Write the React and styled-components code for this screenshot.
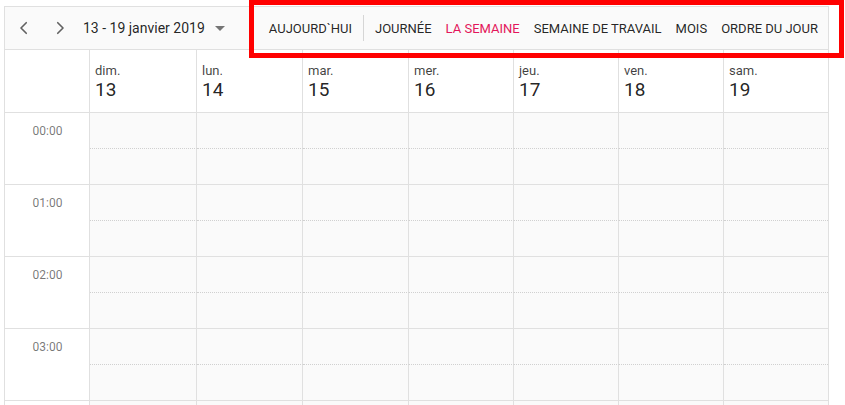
import React from "react";
import styled, { createGlobalStyle } from "styled-components";

const GlobalStyle = createGlobalStyle`
  html, body { margin: 0; padding: 0; background: #fff; overflow: hidden; }
  body { font-family: Roboto, "Noto Sans", "Liberation Sans", sans-serif; }
`;

const Page = styled.div`
  position: relative;
  padding: 6px 0 0 4px;
  height: 405px;
  box-sizing: border-box;
  overflow: hidden;
`;

const Scheduler = styled.div`
  width: 825px;
  box-sizing: border-box;
  border: 1px solid #e0e0e0;
  border-bottom: none;
  background: #fff;
`;

const Toolbar = styled.div`
  display: flex;
  align-items: center;
  height: 43px;
  box-sizing: border-box;
  background: #fafafa;
  border-bottom: 1px solid #e0e0e0;
  padding: 0 3px 0 1px;
`;

const NavButton = styled.button`
  display: flex;
  align-items: center;
  justify-content: center;
  width: 36px;
  height: 36px;
  padding: 0;
  border: none;
  background: transparent;
  color: #616161;
  cursor: pointer;
`;

const DateRange = styled.div`
  display: flex;
  align-items: center;
  margin-left: 5px;
  font-size: 14px;
  color: rgba(0, 0, 0, 0.87);
`;

const Caret = styled.span`
  display: inline-block;
  margin-left: 10px;
  margin-top: 1px;
  width: 0;
  height: 0;
  border-left: 5px solid transparent;
  border-right: 5px solid transparent;
  border-top: 5px solid #757575;
`;

const RightGroup = styled.div`
  display: flex;
  align-items: center;
  margin-left: auto;
`;

const ViewButton = styled.button`
  border: none;
  background: transparent;
  padding: 0 7px;
  height: 32px;
  font-family: Roboto, "Noto Sans", "Liberation Sans", sans-serif;
  font-size: 13px;
  text-transform: uppercase;
  color: ${(p) => (p.$active ? "#e3165b" : "rgba(0,0,0,0.87)")};
  cursor: pointer;
  white-space: nowrap;
`;

const Separator = styled.span`
  width: 1px;
  height: 26px;
  background: #d6d6d6;
  margin: 0 4px;
`;

const Grid = styled.div`
  display: grid;
  grid-template-columns: 85px 107px 106px 106px 105px 105px 105px 1fr;
`;

const CornerCell = styled.div`
  height: 63px;
  box-sizing: border-box;
  border-right: 1px solid #e0e0e0;
  border-bottom: 1px solid #e0e0e0;
`;

const DayHeader = styled.div`
  height: 63px;
  box-sizing: border-box;
  padding: 13px 0 0 5px;
  border-right: ${(p) => (p.$last ? "none" : "1px solid #e0e0e0")};
  border-bottom: 1px solid #e0e0e0;
`;

const DayName = styled.div`
  font-size: 13px;
  line-height: 16px;
  color: rgba(0, 0, 0, 0.75);
`;

const DayNumber = styled.div`
  font-size: 19px;
  line-height: 22px;
  color: rgba(0, 0, 0, 0.87);
`;

const TimeCell = styled.div`
  height: 72px;
  box-sizing: border-box;
  border-right: 1px solid #e0e0e0;
  border-bottom: 1px solid #e0e0e0;
  padding-left: 1px;
  text-align: center;
  font-size: 12px;
  line-height: 36px;
  color: rgba(0, 0, 0, 0.54);
`;

const WorkCell = styled.div`
  height: 36px;
  box-sizing: border-box;
  background: #fafafa;
  border-right: ${(p) => (p.$last ? "none" : "1px solid #e0e0e0")};
  border-bottom: ${(p) =>
    p.$half ? "1px dotted #d0d0d0" : "1px solid #e0e0e0"};
`;

const DayColumn = styled.div`
  display: flex;
  flex-direction: column;
`;

const Highlight = styled.div`
  position: absolute;
  left: 249px;
  top: 0;
  width: 595px;
  height: 58px;
  box-sizing: border-box;
  border: 5px solid #ff0000;
  pointer-events: none;
`;

const Chevron = ({ dir }) => (
  <svg width="18" height="18" viewBox="0 0 24 24" fill="none" stroke="currentColor" strokeWidth="2.2" strokeLinecap="round" strokeLinejoin="round">
    {dir === "left" ? <path d="M15 5l-7 7 7 7" /> : <path d="M9 5l7 7-7 7" />}
  </svg>
);

const days = [
  ["dim.", "13"],
  ["lun.", "14"],
  ["mar.", "15"],
  ["mer.", "16"],
  ["jeu.", "17"],
  ["ven.", "18"],
  ["sam.", "19"],
];

// the fifth row only peeks in at the bottom edge, its label is out of view
const hours = ["00:00", "01:00", "02:00", "03:00", ""];

const views = [
  { label: "Journée" },
  { label: "La semaine", active: true },
  { label: "Semaine de travail" },
  { label: "Mois" },
  { label: "Ordre du jour" },
];

export default function App() {
  return (
    <>
      <GlobalStyle />
      <Page>
        <Scheduler>
          <Toolbar>
            <NavButton aria-label="précédent"><Chevron dir="left" /></NavButton>
            <NavButton aria-label="suivant"><Chevron dir="right" /></NavButton>
            <DateRange>
              13 - 19 janvier 2019
              <Caret />
            </DateRange>
            <RightGroup>
              <ViewButton>Aujourd`hui</ViewButton>
              <Separator />
              {views.map((v) => (
                <ViewButton key={v.label} $active={v.active}>
                  {v.label}
                </ViewButton>
              ))}
            </RightGroup>
          </Toolbar>
          <Grid>
            <CornerCell />
            {days.map(([n, d], i) => (
              <DayHeader key={d} $last={i === days.length - 1}>
                <DayName>{n}</DayName>
                <DayNumber>{d}</DayNumber>
              </DayHeader>
            ))}
            <DayColumn>
              {hours.map((h, i) => (
                <TimeCell key={i}>{h}</TimeCell>
              ))}
            </DayColumn>
            {days.map(([, d], i) => (
              <DayColumn key={d}>
                {hours.map((h, j) => (
                  <React.Fragment key={j}>
                    <WorkCell $half $last={i === days.length - 1} />
                    <WorkCell $last={i === days.length - 1} />
                  </React.Fragment>
                ))}
              </DayColumn>
            ))}
          </Grid>
        </Scheduler>
        <Highlight />
      </Page>
    </>
  );
}
